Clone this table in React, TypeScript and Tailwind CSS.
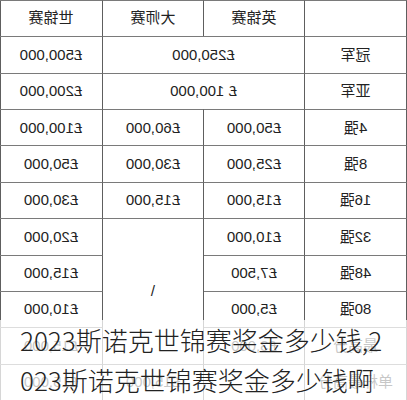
import React from "react";

type Cell = { text: string; span?: string };

// cells are written in reading order; the whole table is mirrored to match the picture
const rows: { label: string; cells: Cell[] }[] = [
  { label: "冠军", cells: [{ text: "£250,000", span: "col-span-2" }, { text: "£500,000" }] },
  { label: "亚军", cells: [{ text: "£ 100,000", span: "col-span-2" }, { text: "£200,000" }] },
  { label: "4强", cells: [{ text: "£50,000" }, { text: "£60,000" }, { text: "£100,000" }] },
  { label: "8强", cells: [{ text: "£25,000" }, { text: "£30,000" }, { text: "£50,000" }] },
  { label: "16强", cells: [{ text: "£15,000" }, { text: "£15,000" }, { text: "£30,000" }] },
  { label: "32强", cells: [{ text: "£10,000" }, { text: "\\", span: "row-span-4" }, { text: "£20,000" }] },
  { label: "48强", cells: [{ text: "£7,500" }, { text: "£15,000" }] },
  { label: "80强", cells: [{ text: "£5,000" }, { text: "£10,000" }] },
  { label: "最高分", cells: [{ text: "£3,000" }, { text: "£15,000" }] },
  { label: "单杆最高分", cells: [{ text: "" }, { text: "£15,000" }, { text: "£15,000" }] },
];

const cell =
  "flex items-center justify-center border-l border-t border-l-[#5e5e5e] border-t-[#7a7a7a]";

export default function App() {
  return (
    <div className="relative w-[407px] h-[400px] overflow-hidden bg-white">
      <div
        className="[transform:scaleX(-1)] grid grid-cols-[102px_101px_101px_103px] grid-rows-[repeat(11,36.36px)] border-r border-b border-r-[#5e5e5e] border-b-[#7a7a7a] text-[15px] text-[#222]"
        style={{ fontFamily: '"Liberation Sans", "Noto Sans CJK SC", sans-serif' }}
      >
        <div className={cell}></div>
        <div className={cell}>英锦赛</div>
        <div className={cell}>大师赛</div>
        <div className={cell}>世锦赛</div>
        {rows.map((r) => (
          <React.Fragment key={r.label}>
            <div className={cell}>{r.label}</div>
            {r.cells.map((c, i) => (
              <div key={i} className={`${cell} ${c.span ?? ""}`}>
                {c.text}
              </div>
            ))}
          </React.Fragment>
        ))}
      </div>

      {/* caption laid over the bottom of the picture */}
      <div
        className="absolute left-0 right-0 top-[320px] bottom-0 bg-white/75 pl-[20px] text-[26px] leading-[40px] font-light text-[#222] whitespace-nowrap"
        style={{ fontFamily: '"Noto Sans CJK SC", "Noto Sans", sans-serif' }}
      >
        <div>2023斯诺克世锦赛奖金多少钱,2</div>
        <div>023斯诺克世锦赛奖金多少钱啊</div>
      </div>
    </div>
  );
}
